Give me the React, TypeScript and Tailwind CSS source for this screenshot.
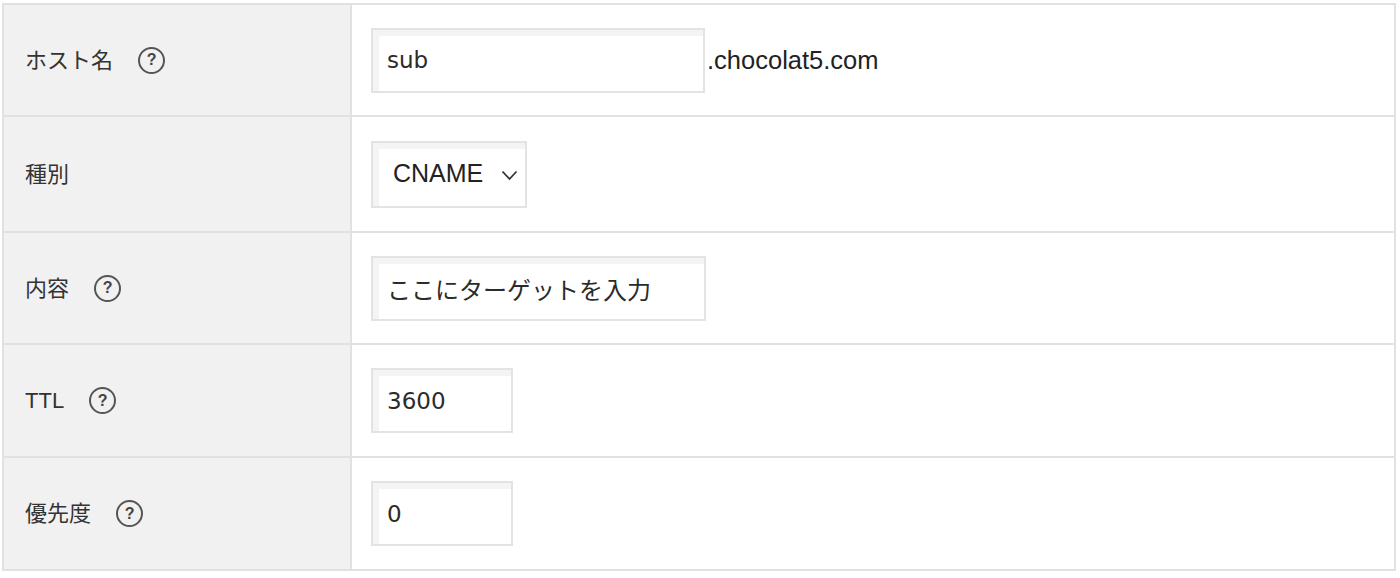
import React from "react";

const labelFont = "font-['Liberation_Sans','Noto_Sans_CJK_JP',sans-serif]";

function HelpIcon() {
  return (
    <span className="ml-[25px] inline-flex h-[27px] w-[27px] items-center justify-center rounded-full border-2 border-[#555] text-[16px] font-bold leading-none text-[#444] font-['Liberation_Sans',sans-serif]">
      ?
    </span>
  );
}

interface RowProps {
  label: string;
  help?: boolean;
  height: string;
  first?: boolean;
  children: React.ReactNode;
}

function Row({ label, help, height, first, children }: RowProps) {
  return (
    <div className={`flex ${height} ${first ? "" : "border-t-2 border-[#e1e1e1]"}`}>
      <div className="flex w-[348px] shrink-0 items-center border-r-2 border-[#e1e1e1] bg-[#f1f1f1] pl-[21px]">
        <span className={`${labelFont} text-[22px] text-[#333]`}>{label}</span>
        {help && <HelpIcon />}
      </div>
      <div className="flex flex-1 items-center bg-white pl-[19px]">{children}</div>
    </div>
  );
}

const inputCls =
  "h-[65px] border-2 border-[#e3e3e3] bg-white px-[14px] text-[23px] text-[#2b2b2b] outline-none shadow-[inset_6px_6px_0_#f4f4f4] font-['DejaVu_Sans','Noto_Sans_CJK_JP',sans-serif]";

export default function App() {
  return (
    <div className="min-h-[578px] bg-white pl-[2px] pt-[3px]">
      <div className="w-[1394px] border-2 border-[#e1e1e1]">
        <Row label="ホスト名" help first height="h-[110px]">
          <input readOnly value="sub" className={`${inputCls} w-[334px]`} />
          <span className="ml-[2px] font-['Liberation_Sans',sans-serif] text-[25.5px] text-[#222]">
            .chocolat5.com
          </span>
        </Row>

        <Row label="種別" height="h-[116px]">
          <div className="relative h-[67px] w-[156px] border-2 border-[#e3e3e3] bg-white shadow-[inset_6px_6px_0_#f4f4f4]">
            <select
              defaultValue="CNAME"
              className="h-full w-full appearance-none bg-transparent pl-[20px] font-['Liberation_Sans',sans-serif] text-[25px] text-[#222] outline-none"
            >
              <option>A</option>
              <option>AAAA</option>
              <option>CNAME</option>
              <option>MX</option>
              <option>TXT</option>
            </select>
            <svg
              className="pointer-events-none absolute right-[7px] top-[27px]"
              width="17"
              height="11"
              viewBox="0 0 17 11"
              fill="none"
            >
              <path d="M1.5 1.5 L8.5 9 L15.5 1.5" stroke="#333" strokeWidth="1.8" />
            </svg>
          </div>
        </Row>

        <Row label="内容" help height="h-[112px]">
          <input readOnly value="ここにターゲットを入力" className={`${inputCls} w-[335px] text-[24px]`} />
        </Row>

        <Row label="TTL" help height="h-[113px]">
          <input readOnly value="3600" className={`${inputCls} w-[142px]`} />
        </Row>

        <Row label="優先度" help height="h-[113px]">
          <input readOnly value="0" className={`${inputCls} w-[142px]`} />
        </Row>
      </div>
    </div>
  );
}
